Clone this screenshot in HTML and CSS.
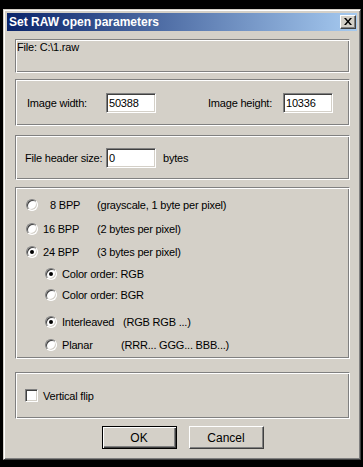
FILE: index.html
```html
<!DOCTYPE html>
<html>
<head>
<meta charset="utf-8">
<link rel="stylesheet" href="styles.css">
</head>
<body>
<div class="window">
  <div class="titlebar">
    <span class="title">Set RAW open parameters</span>
    <span class="close"><svg width="8" height="7" viewBox="0 0 8 7"><path d="M0 0h2l2 2.5L6 0h2L5 3.5 8 7H6L4 4.5 2 7H0l3-3.5z" fill="#000"/></svg></span>
  </div>
  <div class="content">
    <div class="group g-file"><span>File: C:\1.raw</span></div>

    <div class="group g-size">
      <span class="lbl lbl-w">Image width:</span><span class="input">50388</span>
      <span class="lbl lbl-h">Image height:</span><span class="input">10336</span>
    </div>

    <div class="group g-header">
      <span class="lbl lbl-hdr">File header size:</span><span class="input">0</span><span class="unit">bytes</span>
    </div>

    <div class="group g-bpp">
      <div class="opt"><span class="radio"></span><span class="name name-8">8 BPP</span><span>(grayscale, 1 byte per pixel)</span></div>
      <div class="opt gap8"><span class="radio"></span><span class="name">16 BPP</span><span>(2 bytes per pixel)</span></div>
      <div class="opt gap7"><span class="radio on"></span><span class="name">24 BPP</span><span>(3 bytes per pixel)</span></div>
      <div class="opt sub gap6"><span class="radio on"></span><span>Color order: RGB</span></div>
      <div class="opt sub gap5"><span class="radio"></span><span>Color order: BGR</span></div>
      <div class="opt sub gap11"><span class="radio on"></span><span class="name-il">Interleaved</span><span>(RGB RGB ...)</span></div>
      <div class="opt sub gap7"><span class="radio"></span><span class="name-pl">Planar</span><span>(RRR... GGG... BBB...)</span></div>
    </div>

    <div class="group g-flip">
      <span class="check"></span><span>Vertical flip</span>
    </div>

    <div class="buttons">
      <span class="btn btn-default">OK</span>
      <span class="btn">Cancel</span>
    </div>
  </div>
</div>
</body>
</html>
```
FILE: styles.css
```css
html, body {
  margin: 0;
  padding: 0;
  background: #000;
}
body {
  font-family: "Liberation Sans", Arial, sans-serif;
  font-size: 11px;
  letter-spacing: -0.2px;
  color: #000;
}
.window {
  margin: 9px 0 0 3px;
  width: 358px;
  height: 451px;
  box-sizing: border-box;
  background: #d4d0c8;
  border: 1px solid;
  border-color: #d4d0c8 #404040 #404040 #d4d0c8;
  box-shadow: inset 1px 1px #fff, inset -1px -1px #808080;
  padding: 3px;
}
.titlebar {
  height: 18px;
  display: flex;
  align-items: center;
  justify-content: space-between;
  padding: 0 1px 0 2px;
  background: linear-gradient(to right, #0a246a, #a6caf0);
}
.title {
  color: #fff;
  font-weight: bold;
  font-size: 12px;
  letter-spacing: 0;
}
.close {
  width: 16px;
  height: 14px;
  box-sizing: border-box;
  background: #d4d0c8;
  border: 1px solid;
  border-color: #fff #404040 #404040 #fff;
  box-shadow: inset -1px -1px #808080;
  display: flex;
  align-items: center;
  justify-content: center;
  padding: 0 1px 1px 0;
}
.close svg { display: block; }
.content {
  padding: 8px 0 0 8px;
}
.group {
  width: 335px;
  box-sizing: border-box;
  border-style: solid;
  border-width: 1px;
  border-color: #808080 #fff #fff #808080;
  box-shadow: inset 1px 1px #fff, inset -1px -1px #808080;
}
.g-file {
  height: 34px;
  padding: 1px 0 0 1px;
  line-height: 13px;
}
.g-size {
  margin-top: 6px;
  height: 47px;
  display: flex;
  align-items: center;
  padding: 0 0 0 11px;
}
.lbl-w { width: 79px; }
.lbl-h { width: 75px; margin-left: 52px; }
.input {
  width: 50px;
  height: 20px;
  box-sizing: border-box;
  background: #fff;
  border: 1px solid;
  border-color: #808080 #fff #fff #808080;
  box-shadow: inset 1px 1px #404040, inset -1px -1px #d4d0c8;
  padding: 0 0 0 2px;
  line-height: 18px;
}
.g-header {
  margin-top: 9px;
  height: 45px;
  display: flex;
  align-items: center;
  padding: 0 0 0 9px;
}
.lbl-hdr { width: 81px; }
.unit { margin-left: 7px; }
.g-bpp {
  margin-top: 7px;
  height: 172px;
  padding: 9px 0 0 10px;
}
.opt {
  display: flex;
  align-items: center;
  height: 16px;
}
.opt.sub { padding-left: 19px; }
.gap5 { margin-top: 5px; }
.gap6 { margin-top: 6px; }
.gap7 { margin-top: 7px; }
.gap8 { margin-top: 8px; }
.gap11 { margin-top: 11px; }
.radio {
  position: relative;
  width: 12px;
  height: 12px;
  box-sizing: border-box;
  border-radius: 50%;
  background: #fff;
  border: 1px solid;
  border-color: #808080 #fff #fff #808080;
  box-shadow: inset 1px 1px #404040, inset -1px -1px #d4d0c8;
  margin-right: 5px;
  flex: none;
}
.radio.on::after {
  content: "";
  position: absolute;
  left: 3px;
  top: 3px;
  width: 4px;
  height: 4px;
  border-radius: 50%;
  background: #000;
}
.name { width: 54px; }
.name-8 { padding-left: 7px; width: 47px; }
.name-il { width: 61px; }
.name-pl { width: 59px; }
.g-flip {
  margin-top: 13px;
  height: 47px;
  display: flex;
  align-items: center;
  padding: 0 0 0 9px;
}
.check {
  width: 13px;
  height: 13px;
  box-sizing: border-box;
  background: #fff;
  border: 1px solid;
  border-color: #808080 #fff #fff #808080;
  box-shadow: inset 1px 1px #404040, inset -1px -1px #d4d0c8;
  margin-right: 5px;
}
.buttons {
  margin-top: 7px;
  width: 335px;
  display: flex;
  justify-content: center;
  gap: 12px;
}
.btn {
  width: 75px;
  height: 23px;
  box-sizing: border-box;
  display: flex;
  align-items: center;
  justify-content: center;
  border: 1px solid;
  border-color: #fff #404040 #404040 #fff;
  box-shadow: inset -1px -1px #808080;
  letter-spacing: 0;
  font-size: 12px;
}
.btn-default {
  border-color: #000;
  box-shadow: inset 1px 1px #fff, inset -1px -1px #404040, inset -2px -2px #808080;
}
```
